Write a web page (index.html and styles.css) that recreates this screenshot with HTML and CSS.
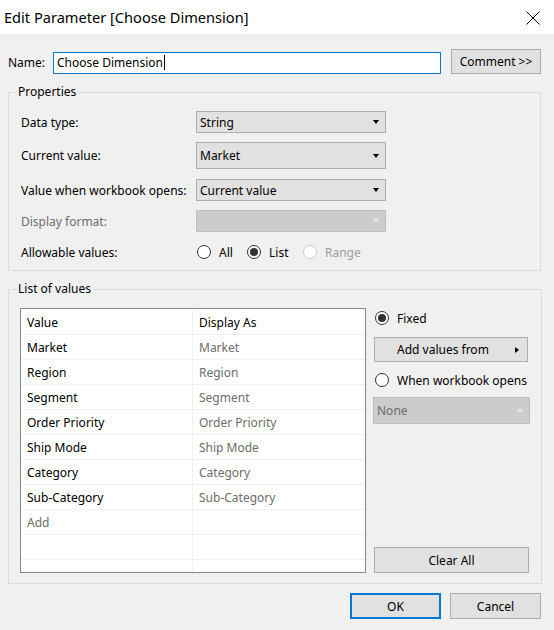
FILE: index.html
```html
<!DOCTYPE html>
<html>
<head>
<meta charset="utf-8">
<link rel="stylesheet" href="styles.css">
</head>
<body>
<div class="dialog">
  <div class="titlebar">
    <span class="title">Edit Parameter [Choose Dimension]</span>
    <svg class="close" width="14" height="14" viewBox="0 0 14 14"><path d="M0.5 0.5 L13.5 13.5 M13.5 0.5 L0.5 13.5" stroke="#000" stroke-width="1" fill="none"/></svg>
  </div>
  <div class="content">
    <div class="name-row">
      <span class="name-label">Name:</span>
      <div class="name-input">Choose Dimension<span class="caret"></span></div>
      <div class="btn comment">Comment &gt;&gt;</div>
    </div>

    <fieldset class="group props">
      <legend>Properties</legend>
      <div class="prop-row r1">
        <span class="plabel">Data type:</span>
        <div class="combo"><span>String</span><span class="arrow"></span></div>
      </div>
      <div class="prop-row r2">
        <span class="plabel">Current value:</span>
        <div class="combo tall"><span>Market</span><span class="arrow"></span></div>
      </div>
      <div class="prop-row r3">
        <span class="plabel">Value when workbook opens:</span>
        <div class="combo"><span>Current value</span><span class="arrow"></span></div>
      </div>
      <div class="prop-row r4">
        <span class="plabel disabled">Display format:</span>
        <div class="combo off"><span></span><span class="arrow"></span></div>
      </div>
      <div class="prop-row r5">
        <span class="plabel">Allowable values:</span>
        <div class="radios">
          <span class="radio-opt w-all"><span class="radio"></span>All</span>
          <span class="radio-opt w-list"><span class="radio on"></span>List</span>
          <span class="radio-opt disabled-opt"><span class="radio dis"></span>Range</span>
        </div>
      </div>
    </fieldset>

    <fieldset class="group list">
      <legend>List of values</legend>
      <div class="list-body">
        <div class="table">
          <div class="trow head"><div class="c1">Value</div><div class="c2 dark">Display As</div></div>
          <div class="trow"><div class="c1">Market</div><div class="c2">Market</div></div>
          <div class="trow"><div class="c1">Region</div><div class="c2">Region</div></div>
          <div class="trow"><div class="c1">Segment</div><div class="c2">Segment</div></div>
          <div class="trow"><div class="c1">Order Priority</div><div class="c2">Order Priority</div></div>
          <div class="trow"><div class="c1">Ship Mode</div><div class="c2">Ship Mode</div></div>
          <div class="trow"><div class="c1">Category</div><div class="c2">Category</div></div>
          <div class="trow"><div class="c1">Sub-Category</div><div class="c2">Sub-Category</div></div>
          <div class="trow"><div class="c1 add">Add</div><div class="c2"></div></div>
          <div class="trow"><div class="c1"></div><div class="c2"></div></div>
          <div class="trow"><div class="c1"></div><div class="c2"></div></div>
        </div>
        <div class="side">
          <div class="side-radio fixed"><span class="radio on"></span>Fixed</div>
          <div class="btn addvals"><span>Add values from</span><span class="rarrow"></span></div>
          <div class="side-radio wopen"><span class="radio"></span>When workbook opens</div>
          <div class="combo off none"><span>None</span><span class="arrow"></span></div>
          <div class="btn clear">Clear All</div>
        </div>
      </div>
    </fieldset>

    <div class="footer">
      <div class="btn ok">OK</div>
      <div class="btn cancel">Cancel</div>
    </div>
  </div>
</div>
</body>
</html>
```
FILE: styles.css
```css
* { box-sizing: border-box; }
html, body { margin: 0; padding: 0; }
body {
  width: 554px;
  height: 630px;
  background: #f0f0f0;
  font-family: "Noto Sans", "Open Sans", sans-serif;
  font-size: 12px;
  color: #000;
  overflow: hidden;
}
.dialog { width: 554px; height: 630px; }

.titlebar {
  height: 34px;
  background: #fff;
  display: flex;
  align-items: center;
  justify-content: space-between;
  padding: 0 14px 0 4px;
}
.title { font-size: 14.6px; line-height: 20px; padding-bottom: 1px; }
.close { display: block; margin-top: 1px; }

.content { padding: 0 13px 0 8px; }

.name-row {
  display: flex;
  align-items: center;
  margin-top: 15px;
  height: 25px;
}
.name-label { width: 45px; padding-top: 1px; }
.name-input {
  width: 388px;
  height: 22px;
  margin-top: 2px;
  background: #fff;
  border: 1px solid #0078d7;
  padding-left: 3px;
  line-height: 20px;
  display: flex;
  align-items: center;
}
.caret { display: inline-block; width: 1px; height: 15px; background: #000; margin-left: 1px; }

.btn {
  background: #e1e1e1;
  border: 1px solid #adadad;
  display: flex;
  align-items: center;
  justify-content: center;
}
.comment { width: 90px; height: 25px; margin-left: 10px; }

.group {
  margin: 0;
  border: 1px solid #dcdcdc;
  min-width: 0;
}
.group legend {
  padding: 0 1px;
  line-height: 16px;
}
.props {
  margin-top: 10px;
  padding: 11px 0 8px 12px;
}
.props legend { margin-left: -4px; }
.prop-row {
  display: flex;
  align-items: center;
}
.plabel { width: 175px; }
.plabel.disabled { color: #6d6d6d; }
.r2 { margin-top: 9px; }
.r3 { margin-top: 10px; }
.r4 { margin-top: 9px; }
.r5 { margin-top: 10px; height: 20px; }

.combo {
  width: 190px;
  height: 22px;
  background: #e1e1e1;
  border: 1px solid #adadad;
  display: flex;
  align-items: center;
  justify-content: space-between;
  padding: 0 6px 0 3px;
}
.combo.tall { height: 27px; }
.arrow {
  width: 0; height: 0;
  border-left: 3.5px solid transparent;
  border-right: 3.5px solid transparent;
  border-top: 4px solid #000;
}
.combo.off { background: #cccccc; border-color: #bfbfbf; color: #6d6d6d; }
.combo.off .arrow { border-top-color: #e8e8e8; }

.radios { display: flex; align-items: center; margin-left: 1px; }
.radio-opt { display: flex; align-items: center; }
.w-all { width: 50px; }
.w-list { width: 56px; }
.disabled-opt { color: #9d9d9d; }
.radio {
  width: 14px; height: 14px;
  border: 1px solid #333;
  border-radius: 50%;
  background: #fff;
  margin-right: 8px;
  display: flex;
  align-items: center;
  justify-content: center;
  flex: none;
}
.radio.on::after {
  content: "";
  width: 8px; height: 8px;
  border-radius: 50%;
  background: #333;
}
.radio.dis { border-color: #cccccc; }

.list {
  margin-top: 10px;
  padding: 11px 0 10px 11px;
  width: 534px;
}
.list legend { margin-left: -3px; }
.list-body { display: flex; height: 265px; }
.table {
  width: 346px;
  height: 265px;
  background: #fff;
  border: 1px solid #828790;
  overflow: hidden;
  flex: none;
}
.trow {
  display: grid;
  grid-template-columns: 172px 1fr;
  height: 25px;
  border-bottom: 1px solid #f0f0f0;
}
.trow.head { height: 26px; padding-top: 1px; }
.c1 {
  border-right: 1px solid #f0f0f0;
  padding-left: 6px;
  display: flex;
  align-items: center;
}
.c2 {
  padding-left: 6px;
  display: flex;
  align-items: center;
  color: #6d6d6d;
}
.c2.dark { color: #000; }
.c1.add { color: #6d6d6d; }

.side {
  margin-left: 7px;
  width: 157px;
  display: flex;
  flex-direction: column;
}
.side-radio { display: flex; align-items: center; height: 20px; padding-left: 2px; }
.addvals {
  width: 154px; height: 25px;
  margin: 9px 0 0 1px;
  justify-content: flex-start;
  padding-left: 22px;
}
.rarrow {
  width: 0; height: 0;
  border-top: 3.5px solid transparent;
  border-bottom: 3.5px solid transparent;
  border-left: 4px solid #000;
  margin-left: auto;
  margin-right: 8px;
}
.wopen { margin-top: 8px; }
.none { width: 157px; height: 27px; margin-top: 7px; }
.clear {
  width: 155px; height: 26px;
  margin: auto 0 0 1px;
}

.footer {
  display: flex;
  justify-content: flex-end;
  gap: 9px;
  margin-top: 9px;
}
.ok, .cancel { width: 91px; height: 26px; }
.ok { border: 2px solid #0078d7; }
```
